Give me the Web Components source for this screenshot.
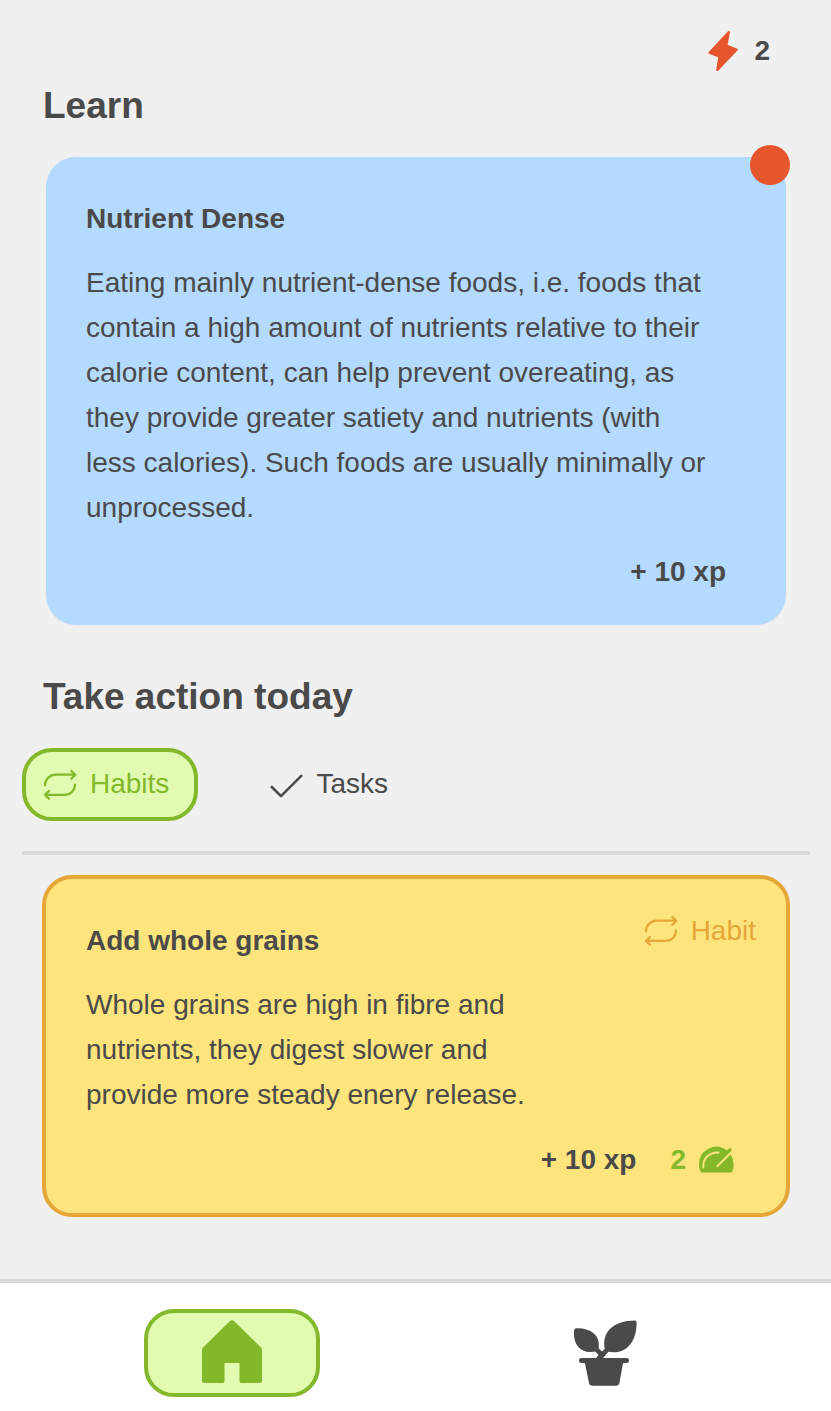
<!DOCTYPE html>
<html lang="en">
<head>
<meta charset="utf-8">
<meta name="viewport" content="width=device-width, initial-scale=1">
<title>Learn</title>
<style>
  :root {
    --ink: #4a4a4a;
    --page: #f0f0f0;
    --line: #d9d9d9;
    --alert: #e6562c;
    --green: #82b82a;
    --green-soft: #e1fcb0;
    --blue: #b4dbff;
    --yellow: #fde47d;
    --amber: #e7a63a;
    --radius: 30px;
  }
  body {
    margin: 0;
    background: var(--page);
    color: var(--ink);
    font: 28px/45px "Liberation Sans", Arial, sans-serif;
  }
</style>
</head>
<body>
<app-shell>
  <xp-counter slot="top">2</xp-counter>
  <section-title>Learn</section-title>
  <learn-card>
    <span slot="title">Nutrient Dense</span>
    Eating mainly nutrient-dense foods, i.e. foods that contain a high amount of nutrients relative to their calorie content, can help prevent overeating, as they provide greater satiety and nutrients (with less calories). Such foods are usually minimally or unprocessed.
    <span slot="xp">+ 10 xp</span>
  </learn-card>
  <section-title class="second">Take action today</section-title>
  <tab-bar>
    <tab-button icon="repeat" active>Habits</tab-button>
    <tab-button icon="check">Tasks</tab-button>
  </tab-bar>
  <habit-card>
    <span slot="title">Add whole grains</span>
    Whole grains are high in fibre and nutrients, they digest slower and provide more steady enery release.
    <span slot="tag">Habit</span>
    <span slot="xp">+ 10 xp</span>
    <span slot="effort">2</span>
  </habit-card>
  <nav-bar slot="bottom">
    <nav-item icon="home" label="Home" active></nav-item>
    <nav-item icon="plant" label="Garden"></nav-item>
  </nav-bar>
</app-shell>

<script>
const ICONS = {
  bolt: [32, 40, `<path fill="currentColor" d="M21 .3Q22.800-.4 23 1.300L20.600 13.700 30.200 17.800Q31.400 18.400 30.400 19.500L11.500 39.500Q9.400 41 9.200 38.800L11.200 26.200 1.900 22.700Q.7 22 1.700 20.900Z"/>`],
  repeat: [34, 32, `<g fill="none" stroke="currentColor" stroke-width="2.200" stroke-linecap="round" stroke-linejoin="round"><path d="M2 16.500C2 10.500 6.500 5.700 13 5.700H32M28.300 2 32.300 5.700 28.300 9.700"/><path d="M32 15.500C32 21.500 27.500 25.900 21 25.900H2M6 22 2 25.900 6 29.800"/></g>`],
  check: [34, 32, `<path fill="none" stroke="currentColor" stroke-width="2.600" stroke-linecap="round" stroke-linejoin="round" d="M2.800 18 12 27.200 32.300 6.800"/>`],
  gauge: [36, 28, `<path fill="currentColor" d="M4.700 26.500Q2.900 26.500 2.300 25Q1 22 1 18.500A17.200 17.500 0 0 1 28.500 4.300L31.800 2.200Q33.800 2 33.500 4L32.600 8.500Q35.600 13 35.600 18.500Q35.600 22 34.500 25 33.900 26.500 32 26.500Z"/><g fill="none" stroke="var(--yellow)" stroke-width="2" stroke-linecap="round"><path d="M5.400 21.500C4.500 12.500 11 6.300 20.600 6.400"/><path d="M19.500 20 33.400 6.200"/></g>`],
  home: [60, 66, `<path fill="currentColor" d="M27.500 1.400Q30-.8 32.500 1.400L59 27.400Q60 28.400 60 30V61Q60 63 58 63H39.500Q37.500 63 37.500 61V43H22.500V61Q22.500 63 20.500 63H2Q0 63 0 61V30Q0 28.400 1 27.400Z"/>`],
  plant: [64, 66, `<path fill="currentColor" d="M1.200 9.800Q1.200 8.500 2.500 8.400C18 7.500 28.500 16 25.300 29.500Q25 30.600 24 30.900C10 35.500-1 26 1.200 9.800Z"/><path fill="currentColor" d="M62.200.6Q63.600.7 63.600 2.200C63.800 25 50 36 33.500 31.200Q32.300 30.800 32 29.500C28 13 40 .5 62.200.6Z"/><path fill="none" stroke="currentColor" stroke-width="4.600" d="M20 26 31 37M37 27 25 39"/><rect x="6" y="38" width="50" height="5" rx="2.500" fill="currentColor"/><path fill="currentColor" d="M11.700 42H50.200L46.500 62.500Q45.900 65.800 43 65.800H19.500Q16.500 65.800 15.900 62.500Z"/>`]
};

function icon(name) {
  const [w, h, body] = ICONS[name];
  return `<svg width="${w}" height="${h}" viewBox="0 0 ${w} ${h}" aria-hidden="true">${body}</svg>`;
}

const BASE = `*, *::before, *::after { box-sizing: border-box; } svg { display: block; flex: none; }`;

function define(tag, render) {
  customElements.define(tag, class extends HTMLElement {
    constructor() {
      super();
      this.attachShadow({ mode: "open" });
    }
    connectedCallback() {
      const template = document.createElement("template");
      template.innerHTML = render(this);
      this.shadowRoot.replaceChildren(template.content.cloneNode(true));
    }
  });
}

define("app-shell", () => `
  <style>${BASE}
    :host { display: flex; flex-direction: column; min-height: 100vh; }
    header { display: flex; justify-content: flex-end; padding: 31px 61px 0 42px; }
    main { flex: 1; padding: 12px 21px 62px 22px; }
  </style>
  <header><slot name="top"></slot></header>
  <main><slot></slot></main>
  <slot name="bottom"></slot>`);

define("xp-counter", () => `
  <style>${BASE}
    :host { display: flex; align-items: center; gap: 15px; height: 40px; font-weight: bold; }
    svg { color: var(--alert); }
    span { padding-bottom: 2px; }
  </style>
  ${icon("bolt")}<span><slot></slot></span>`);

define("section-title", () => `
  <style>${BASE}
    :host { display: block; margin: 0 21px 29px; }
    :host(.second) { margin-top: 49px; }
    h2 { margin: 0; font-size: 37px; line-height: 45px; }
  </style>
  <h2><slot></slot></h2>`);

define("learn-card", () => `
  <style>${BASE}
    :host { display: block; margin: 0 24px; }
    article { position: relative; padding: 39px 60px 31px 40px; border-radius: var(--radius); background: var(--blue); }
    .dot { position: absolute; top: -12px; right: -4px; width: 40px; height: 40px; border-radius: 50%; background: var(--alert); }
    h3 { margin: 0 0 19px; font-size: 28px; }
    p { margin: 0 0 19px; padding-right: 16px; }
    .xp { font-weight: bold; text-align: right; }
  </style>
  <article>
    <span class="dot"></span>
    <h3><slot name="title"></slot></h3>
    <p><slot></slot></p>
    <div class="xp"><slot name="xp"></slot></div>
  </article>`);

define("tab-bar", () => `
  <style>${BASE}
    :host { display: block; margin-bottom: 20px; }
    div { display: flex; gap: 50px; padding-bottom: 30px; border-bottom: 4px solid var(--line); }
  </style>
  <div role="tablist"><slot></slot></div>`);

define("tab-button", el => `
  <style>${BASE}
    :host { display: block; }
    button {
      display: flex; align-items: center; gap: 13px; height: 73px; padding: 0 25px 0 17px;
      border: 4px solid transparent; border-radius: var(--radius); background: none;
      color: inherit; font: inherit; cursor: pointer;
    }
    span { padding-bottom: 2px; }
    :host([active]) button { border-color: var(--green); background: var(--green-soft); color: var(--green); }
  </style>
  <button type="button" role="tab" aria-selected="${el.hasAttribute("active")}">
    ${icon(el.getAttribute("icon"))}<span><slot></slot></span>
  </button>`);

define("habit-card", () => `
  <style>${BASE}
    :host { display: block; margin: 0 20px; }
    article { padding: 29px 30px 31px 40px; border: 4px solid var(--amber); border-radius: var(--radius); background: var(--yellow); }
    .top { display: flex; align-items: flex-start; gap: 80px; }
    .text { flex: 1; padding-top: 10px; }
    h3 { margin: 0 0 19px; font-size: 28px; }
    p { margin: 0 0 20px; }
    .tag { display: flex; align-items: center; gap: 13px; color: var(--amber); }
    .bottom { display: flex; justify-content: flex-end; gap: 34px; padding-right: 22px; font-weight: bold; }
    .effort { display: flex; align-items: center; gap: 12px; color: var(--green); }
  </style>
  <article>
    <div class="top">
      <div class="text">
        <h3><slot name="title"></slot></h3>
        <p><slot></slot></p>
      </div>
      <div class="tag">${icon("repeat")}<slot name="tag"></slot></div>
    </div>
    <div class="bottom">
      <slot name="xp"></slot>
      <div class="effort"><slot name="effort"></slot>${icon("gauge")}</div>
    </div>
  </article>`);

define("nav-bar", () => `
  <style>${BASE}
    :host { display: block; }
    nav {
      display: grid; grid-template-columns: 1fr 1fr; justify-items: center;
      padding: 26px 40px 14px 45px; border-top: 4px solid var(--line); background: #fff;
    }
  </style>
  <nav><slot></slot></nav>`);

define("nav-item", el => `
  <style>${BASE}
    :host { display: block; }
    a {
      display: flex; align-items: center; justify-content: center; width: 176px; height: 88px;
      border: 4px solid transparent; border-radius: var(--radius); color: inherit;
    }
    :host([active]) a { border-color: var(--green); background: var(--green-soft); color: var(--green); }
  </style>
  <a href="#${el.getAttribute("icon")}" aria-label="${el.getAttribute("label")}">${icon(el.getAttribute("icon"))}</a>`);
</script>
</body>
</html>
